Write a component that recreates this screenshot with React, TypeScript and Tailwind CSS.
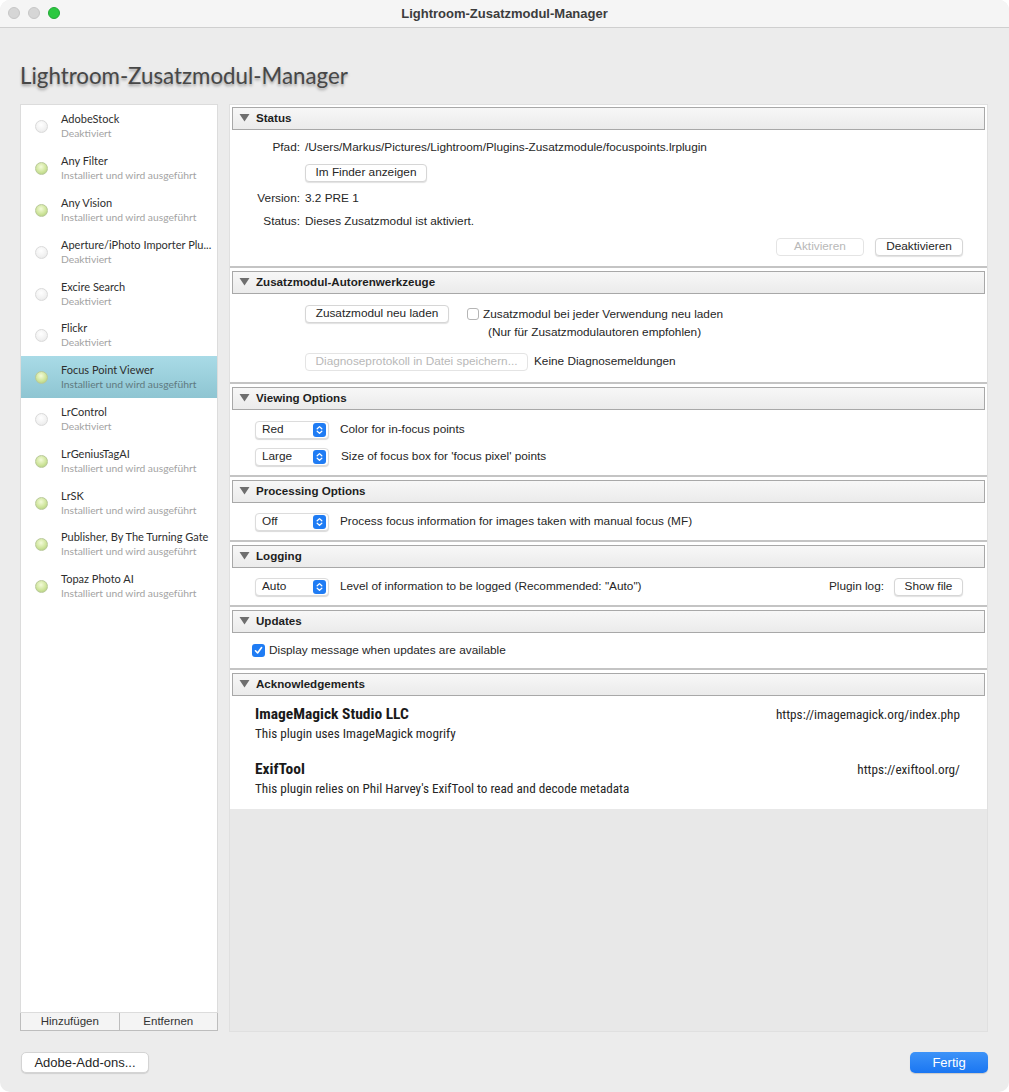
import type { ReactNode } from "react";

const sys = "font-['Liberation_Sans',Arial,sans-serif]";
const myriad = "font-['Lato','Open_Sans',sans-serif]";
const narrow = "font-['Roboto_Condensed','Liberation_Sans_Narrow','Roboto',sans-serif]";

const plugins = [
  { name: "AdobeStock", on: false },
  { name: "Any Filter", on: true },
  { name: "Any Vision", on: true },
  { name: "Aperture/iPhoto Importer Plu...", on: false },
  { name: "Excire Search", on: false },
  { name: "Flickr", on: false },
  { name: "Focus Point Viewer", on: true, selected: true },
  { name: "LrControl", on: false },
  { name: "LrGeniusTagAI", on: true },
  { name: "LrSK", on: true },
  { name: "Publisher, By The Turning Gate", on: true },
  { name: "Topaz Photo AI", on: true }
];

function Dot({ on }: { on: boolean }) {
  return on ? (
    <span className="block h-[13px] w-[13px] rounded-full border border-[#b9c99a] bg-[radial-gradient(circle_at_45%_35%,#f3fbd9_0%,#cfe59c_55%,#a9c877_100%)]" />
  ) : (
    <span className="block h-[13px] w-[13px] rounded-full border border-[#dadada] bg-[radial-gradient(circle_at_45%_35%,#ffffff_0%,#f1f1f1_60%,#e2e2e2_100%)]" />
  );
}

function MacButton({ children, disabled, className = "" }: { children: ReactNode; disabled?: boolean; className?: string }) {
  return (
    <div
      className={`flex h-[18px] items-center justify-center rounded-[4px] border bg-white text-[11.8px] ${
        disabled
          ? "border-[#e4e4e4] text-[#b8b8b8]"
          : "border-[#d6d6d6] text-[#262626] shadow-[0_1px_1px_rgba(0,0,0,0.12)]"
      } ${className}`}
    >
      {children}
    </div>
  );
}

function Select({ value }: { value: string }) {
  return (
    <div className="flex h-[18px] w-[74px] items-center justify-between rounded-[4px] border border-[#dcdcdc] bg-white pl-[6px] pr-[2px] text-[11.8px] text-[#262626] shadow-[0_1px_1px_rgba(0,0,0,0.15)]">
      <span>{value}</span>
      <span className="flex h-[14px] w-[13px] items-center justify-center rounded-[3px] bg-[#1f7cf4]">
        <svg width="7" height="10" viewBox="0 0 7 10" fill="none">
          <path d="M1.2 3.8 3.5 1.6 5.8 3.8M1.2 6.2 3.5 8.4 5.8 6.2" stroke="white" strokeWidth="1.3" strokeLinecap="round" strokeLinejoin="round" />
        </svg>
      </span>
    </div>
  );
}

function Header({ title }: { title: string }) {
  return (
    <div className="bg-white pt-[2px]">
      <div className="mx-[2px] flex h-[23px] items-center border border-[#a8a8a8] bg-[linear-gradient(#f7f7f7,#ebebeb)] pb-[2px] pl-[6px]">
        <svg width="11" height="9" viewBox="0 0 11 9">
          <path d="M0.5 1h10L5.5 8.4z" fill="#6e6e6e" />
        </svg>
        <span className="ml-[6px] text-[11.6px] font-bold text-[#1e1e1e]">{title}</span>
      </div>
    </div>
  );
}

function Section({ title, children, contentClass }: { title: string; children: ReactNode; contentClass: string }) {
  return (
    <div className="bg-white">
      <Header title={title} />
      <div className={contentClass}>{children}</div>
      <div className="h-[2px] bg-[#c4c4c4]" />
      <div className="h-[1px] bg-white" />
    </div>
  );
}

export default function App() {
  return (
    <div className={`flex h-[1092px] w-[1009px] flex-col overflow-hidden rounded-[10px] bg-[#ececec] ${sys}`}>
      {/* title bar */}
      <div className="relative flex h-[28px] shrink-0 items-center justify-center border-b border-[#cfcfcf] bg-[#f5f5f5]">
        <div className="absolute left-[8px] top-[7px] flex gap-[8px]">
          <span className="h-[12px] w-[12px] rounded-full border border-[#c6c6c6] bg-[#d6d6d6]" />
          <span className="h-[12px] w-[12px] rounded-full border border-[#c6c6c6] bg-[#d6d6d6]" />
          <span className="h-[12px] w-[12px] rounded-full border border-[#22a836] bg-[#2bc840]" />
        </div>
        <span className="text-[13px] font-bold text-[#3c3c3c]">Lightroom-Zusatzmodul-Manager</span>
      </div>

      {/* heading */}
      <div className="flex h-[76px] shrink-0 items-end px-[20px] pb-[17px]">
        <h1 className={`text-[22.3px] leading-none text-[#474747] [text-shadow:0_2px_3px_rgba(0,0,0,0.35)] ${myriad}`}>
          Lightroom-Zusatzmodul-Manager
        </h1>
      </div>

      {/* main panels */}
      <div className="flex h-[928px] shrink-0 gap-[11px] pl-[20px] pr-[21px]">
        <div className="flex w-[198px] flex-col">
          <div className={`flex-1 border border-[#dcdcdc] bg-white ${myriad}`}>
            {plugins.map((p) => (
              <div
                key={p.name}
                className={`flex h-[41.8px] items-center pt-[1px] ${
                  p.selected ? "bg-[linear-gradient(#a9dbe7,#8ec5d2)]" : ""
                }`}
              >
                <div className="flex w-[40px] justify-center pl-[1px] pt-[1px]">
                  <Dot on={p.on} />
                </div>
                <div className="flex flex-col whitespace-nowrap leading-[14px]">
                  <span className="text-[11px] text-[#2e2e2e]">{p.name}</span>
                  <span className={`text-[10.3px] ${p.selected ? "text-[#5f7a80]" : "text-[#a3a3a3]"}`}>
                    {p.on ? "Installiert und wird ausgeführt" : "Deaktiviert"}
                  </span>
                </div>
              </div>
            ))}
          </div>
          <div className="flex h-[18px] border border-t-0 border-[#bdbdbd] text-[11.5px] text-[#333]">
            <div className="flex flex-1 items-center justify-center border-r border-[#bdbdbd] bg-[#f4f4f4]">Hinzufügen</div>
            <div className="flex flex-1 items-center justify-center bg-[#f4f4f4]">Entfernen</div>
          </div>
          <div className="h-[1px]" />
        </div>

        <div className="flex flex-1 flex-col border border-[#e0e0e0] bg-[#e8e8e8] text-[11.8px] text-[#262626]">
          <Section title="Status" contentClass="h-[136px]">
            <div className="grid grid-cols-[70px_1fr] gap-x-[5px] pt-[9px]">
              <span className="flex h-[18px] items-center justify-end">Pfad:</span>
              <span className="flex h-[18px] items-center">/Users/Markus/Pictures/Lightroom/Plugins-Zusatzmodule/focuspoints.lrplugin</span>
              <span />
              <div className="pt-[7px]">
                <MacButton className="w-[122px]">Im Finder anzeigen</MacButton>
              </div>
              <span className="mt-[8px] flex h-[18px] items-center justify-end">Version:</span>
              <span className="mt-[8px] flex h-[18px] items-center">3.2 PRE 1</span>
              <span className="mt-[5px] flex h-[18px] items-center justify-end">Status:</span>
              <span className="mt-[5px] flex h-[18px] items-center">Dieses Zusatzmodul ist aktiviert.</span>
            </div>
            <div className="mt-[7px] flex justify-end gap-[11px] pr-[24px]">
              <MacButton disabled className="w-[88px]">Aktivieren</MacButton>
              <MacButton className="w-[88px]">Deaktivieren</MacButton>
            </div>
          </Section>

          <Section title="Zusatzmodul-Autorenwerkzeuge" contentClass="h-[88px] pl-[75px] pt-[11px]">
            <div className="flex items-start">
              <MacButton className="w-[144px]">Zusatzmodul neu laden</MacButton>
              <div className="ml-[18px] mt-[3px] h-[12px] w-[12px] rounded-[3px] border border-[#b5b5b5] bg-white" />
              <div className="ml-[4px] flex flex-col leading-[18px]">
                <span>Zusatzmodul bei jeder Verwendung neu laden</span>
                <span className="pl-[5px]">(Nur für Zusatzmodulautoren empfohlen)</span>
              </div>
            </div>
            <div className="mt-[12px] flex items-center gap-[6px]">
              <MacButton disabled className="w-[223px]">Diagnoseprotokoll in Datei speichern...</MacButton>
              <span>Keine Diagnosemeldungen</span>
            </div>
          </Section>

          <Section title="Viewing Options" contentClass="h-[65px] pl-[25px] pt-[11px] flex flex-col gap-[9px]">
            <div className="flex items-center gap-[11px]">
              <Select value="Red" />
              <span>Color for in-focus points</span>
            </div>
            <div className="flex items-center gap-[12px]">
              <Select value="Large" />
              <span>Size of focus box for 'focus pixel' points</span>
            </div>
          </Section>

          <Section title="Processing Options" contentClass="h-[37px] pl-[25px] pt-[10px]">
            <div className="flex items-center gap-[11px]">
              <Select value="Off" />
              <span>Process focus information for images taken with manual focus (MF)</span>
            </div>
          </Section>

          <Section title="Logging" contentClass="h-[37px] pl-[25px] pr-[24px] pt-[10px]">
            <div className="flex items-center gap-[11px]">
              <Select value="Auto" />
              <span className="flex-1">Level of information to be logged (Recommended: "Auto")</span>
              <span className="mr-[-1px]">Plugin log:</span>
              <MacButton className="w-[69px]">Show file</MacButton>
            </div>
          </Section>

          <Section title="Updates" contentClass="h-[35px] pl-[22px] pt-[9px]">
            <div className="flex items-center gap-[4px]">
              <span className="flex h-[13px] w-[13px] items-center justify-center rounded-[3px] bg-[#1f7cf4]">
                <svg width="9" height="9" viewBox="0 0 9 9" fill="none">
                  <path d="M1.5 4.8 3.6 7 7.6 1.6" stroke="white" strokeWidth="1.6" strokeLinecap="round" strokeLinejoin="round" />
                </svg>
              </span>
              <span>Display message when updates are available</span>
            </div>
          </Section>

          <div className="bg-white">
            <Header title="Acknowledgements" />
            <div className={`h-[113px] pl-[25px] pr-[27px] pt-[10px] ${narrow}`}>
              <div className="flex h-[18px] items-center justify-between">
                <span className="text-[15.5px] font-bold text-[#1a1a1a]">ImageMagick Studio LLC</span>
                <span className="text-[13.2px]">https://imagemagick.org/index.php</span>
              </div>
              <div className="mt-[2px] flex h-[16px] items-center text-[13.2px]">This plugin uses ImageMagick mogrify</div>
              <div className="mt-[19px] flex h-[18px] items-center justify-between">
                <span className="text-[15.5px] font-bold text-[#1a1a1a]">ExifTool</span>
                <span className="text-[13.2px]">https://exiftool.org/</span>
              </div>
              <div className="mt-[2px] flex h-[16px] items-center text-[13.2px]">
                This plugin relies on Phil Harvey's ExifTool to read and decode metadata
              </div>
            </div>
          </div>
          <div className="flex-1" />
        </div>
      </div>

      {/* footer */}
      <div className="flex flex-1 items-start justify-between pl-[21px] pr-[21px] pt-[20px]">
        <div className="flex h-[21px] w-[128px] items-center justify-center rounded-[5px] border border-[#d4d4d4] bg-white text-[13px] text-[#262626] shadow-[0_1px_1px_rgba(0,0,0,0.12)]">
          Adobe-Add-ons...
        </div>
        <div className="flex h-[21px] w-[78px] items-center justify-center rounded-[5px] bg-[linear-gradient(#3d93f8,#1a76f2)] text-[13px] text-white shadow-[0_1px_1px_rgba(0,0,0,0.15)]">
          Fertig
        </div>
      </div>
    </div>
  );
}
